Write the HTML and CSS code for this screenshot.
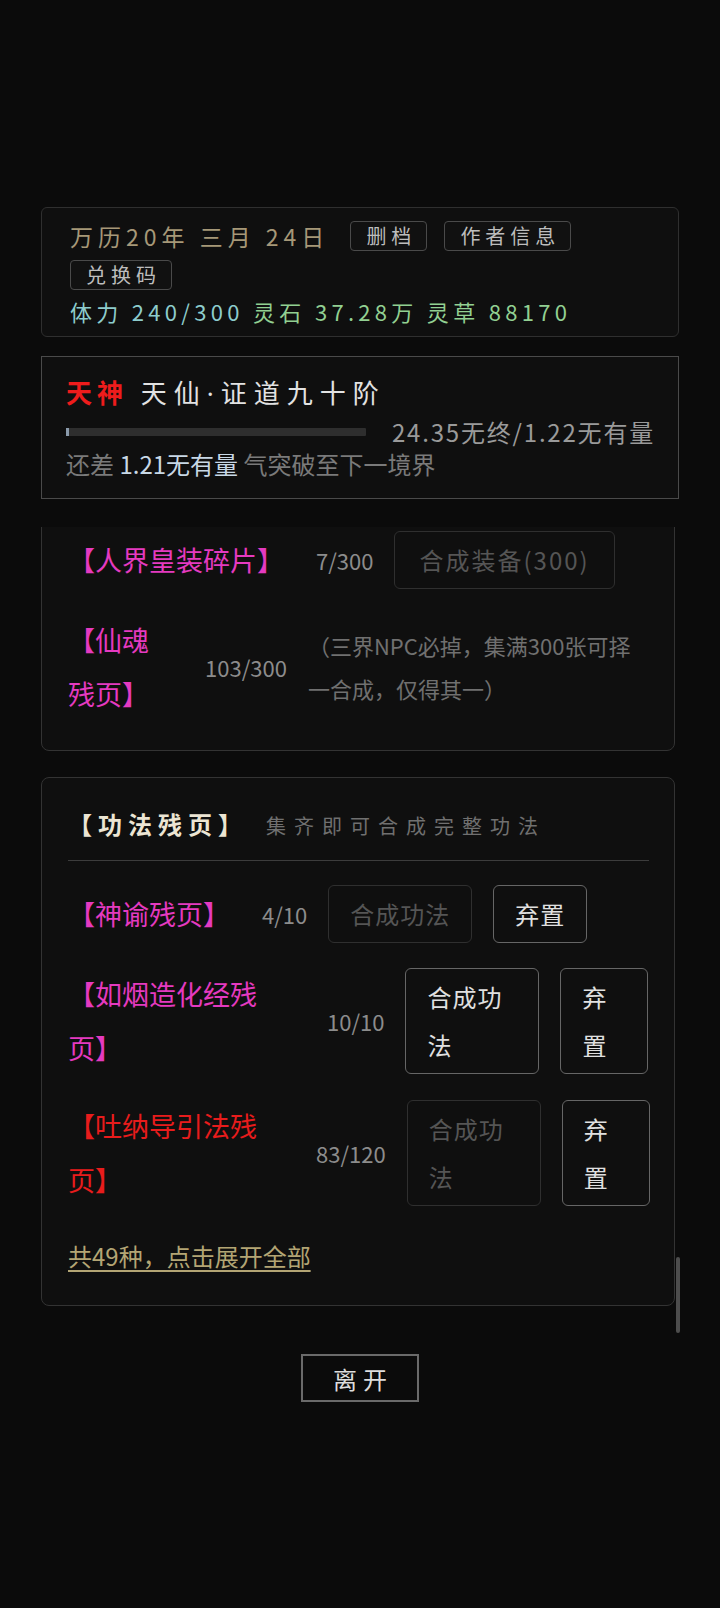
FILE: index.html
```html
<!DOCTYPE html>
<html lang="zh-CN">
<head>
    <meta charset="UTF-8">
    <meta name="viewport" content="width=device-width, initial-scale=1.0">
    <title>残页合成</title>
    <link rel="stylesheet" href="styles.css">
</head>
<body>
<div class="page">

    <div class="info">
        <div class="info-top">
            <span class="date">万历20年 三月 24日</span>
            <button class="tag">删档</button>
            <button class="tag">作者信息</button>
            <button class="tag">兑换码</button>
        </div>
        <div class="stats"><span class="hp">体力 240/300</span> <span class="res">灵石 37.28万 灵草 88170</span></div>
    </div>

    <div class="realm">
        <div class="realm-title"><span class="rank">天神</span> 天仙<span class="dot">·</span>证道九十阶</div>
        <div class="realm-exp">
            <div class="bar"><div class="bar-fill" style="width:1%"></div></div>
            <span class="exp">24.35无终/1.22无有量</span>
        </div>
        <div class="realm-need">还差 <span class="hl">1.21无有量</span> 气突破至下一境界</div>
    </div>

    <div class="scroll">
        <div class="box box-cut">
            <div class="row">
                <div class="name pink">【人界皇装碎片】</div>
                <div class="count">7/300</div>
                <button class="btn btn-off btn-wide">合成装备(300)</button>
            </div>
            <div class="row">
                <div class="name pink name-s">【仙魂残页】</div>
                <div class="count">103/300</div>
                <div class="note">（三界NPC必掉，集满300张可择一合成，仅得其一）</div>
            </div>
        </div>

        <div class="box">
            <div class="box-head">
                <span class="head-title">【功法残页】</span>
                <span class="head-sub">集齐即可合成完整功法</span>
            </div>
            <div class="row">
                <div class="name pink">【神谕残页】</div>
                <div class="count">4/10</div>
                <button class="btn btn-off">合成功法</button>
                <button class="btn">弃置</button>
            </div>
            <div class="row">
                <div class="name pink name-l">【如烟造化经残页】</div>
                <div class="count">10/10</div>
                <button class="btn btn-m">合成功法</button>
                <button class="btn btn-s">弃置</button>
            </div>
            <div class="row">
                <div class="name red name-m">【吐纳导引法残页】</div>
                <div class="count">83/120</div>
                <button class="btn btn-off btn-m">合成功法</button>
                <button class="btn btn-s">弃置</button>
            </div>
            <a class="more" href="#">共49种，点击展开全部</a>
        </div>

        <div class="scrollbar"></div>
    </div>

    <div class="leave-wrap">
        <button class="leave">离开</button>
    </div>

</div>
</body>
</html>
```

FILE: styles.css
```css
body {
    margin: 0;
    background: #0b0b0b;
    color: #ddd;
    font-family: "Noto Sans CJK SC", "Noto Sans", sans-serif;
}
button { font-family: inherit; cursor: pointer; }

.page { padding: 207px 41px 0; }

/* top info */
.info {
    border: 1px solid #2f2f2f;
    border-radius: 6px;
    background: #0f0f0f;
    padding: 13px 26px 9px 28px;
}
.info-top {
    display: flex;
    flex-wrap: wrap;
    align-items: center;
    column-gap: 17px;
    row-gap: 9px;
}
.date {
    font-size: 23px;
    letter-spacing: 5px;
    line-height: 30px;
    color: #a69878;
    margin-right: 4px;
}
.tag {
    font-size: 20px;
    letter-spacing: 5px;
    line-height: 28px;
    padding: 0 10px 0 15px;
    border: 1px solid #4a4a4a;
    border-radius: 4px;
    background: #111;
    color: #bdbdbd;
}
.stats {
    font-size: 22px;
    letter-spacing: 4.3px;
    line-height: 32px;
    margin-top: 5px;
}
.hp { color: #8dcccc; }
.res { color: #92d092; }

/* realm */
.realm {
    margin-top: 19px;
    border: 1px solid #4a4a4a;
    background: #0f0f0f;
    padding: 17px 24px 18px;
}
.realm-title {
    font-size: 26px;
    letter-spacing: 7px;
    line-height: 36px;
    color: #e2e2e2;
}
.rank { color: #ee1c1c; font-weight: 700; letter-spacing: 5px; }
.dot { font-family: "Noto Sans", sans-serif; }
.realm-exp {
    display: flex;
    align-items: center;
    gap: 26px;
    height: 32px;
    margin-top: 5px;
}
.bar {
    flex: none;
    width: 300px;
    height: 8px;
    background: #2e2e2e;
    border-radius: 1px;
}
.bar-fill { height: 100%; background: #8a9aab; }
.exp {
    font-size: 24px;
    letter-spacing: 1.8px;
    line-height: 32px;
    color: #9a9a9a;
    white-space: nowrap;
}
.realm-need {
    font-size: 24px;
    line-height: 32px;
    color: #7a7a7a;
}
.hl { color: #c8d8e6; }

/* scroll list */
.scroll {
    position: relative;
    height: 806px;
    margin-top: 28px;
    margin-right: -1px;
    overflow: hidden;
}
.scrollbar {
    position: absolute;
    right: 0;
    bottom: 0;
    width: 4px;
    height: 76px;
    border-radius: 2px;
    background: #4d4d4d;
}
.box {
    margin: 26px 5px 0 0;
    border: 1px solid #333;
    border-radius: 8px;
    background: #0f0f0f;
    padding: 0 25px 17px 26px;
}
.box-cut { margin-top: -9px; }

.box-head {
    display: flex;
    align-items: baseline;
    line-height: 40px;
    padding: 26px 0 14px;
    border-bottom: 1px solid #3c3c3c;
    margin-bottom: 12px;
}
.head-title {
    font-size: 24px;
    font-weight: 700;
    letter-spacing: 6px;
    color: #ece5d3;
}
.head-sub {
    font-size: 20px;
    letter-spacing: 8px;
    color: #707070;
    margin-left: 18px;
}

.row {
    display: flex;
    align-items: center;
    padding: 12px 0;
}
.name {
    flex: none;
    font-size: 27px;
    line-height: 54px;
    margin-right: 32px;
}
.pink { color: #e53ac0; }
.red { color: #e81c1c; }
.name-s { width: 105px; }
.name-m { width: 216px; }
.name-l { width: 227px; }

.count {
    flex: none;
    font-size: 22px;
    color: #8c8c8c;
    margin-right: 21px;
}
.note {
    flex: none;
    width: 330px;
    font-size: 22px;
    line-height: 43px;
    color: #707070;
}

.btn {
    flex: none;
    box-sizing: border-box;
    font-size: 24px;
    letter-spacing: 1px;
    line-height: 48px;
    padding: 4px 21px;
    border: 1px solid #666;
    border-radius: 6px;
    background: #0f0f0f;
    color: #e0e0e0;
    text-align: left;
}
.btn + .btn { margin-left: 21px; }
.btn-off { border-color: #2f2f2f; color: #555; }
.btn-wide { letter-spacing: 2px; padding: 4px 24px; }
.btn-m { width: 134px; }
.btn-s { width: 88px; }

.more {
    display: inline-block;
    margin: 17px 0 12px;
    font-size: 24px;
    line-height: 40px;
    color: #b3a574;
    text-decoration: underline;
    text-underline-offset: 4px;
}

.leave-wrap { text-align: center; padding-top: 21px; }
.leave {
    height: 48px;
    font-size: 24px;
    letter-spacing: 6px;
    padding: 0 24px 0 30px;
    border: 2px solid #6a6a6a;
    background: transparent;
    color: #ddd;
}
```
